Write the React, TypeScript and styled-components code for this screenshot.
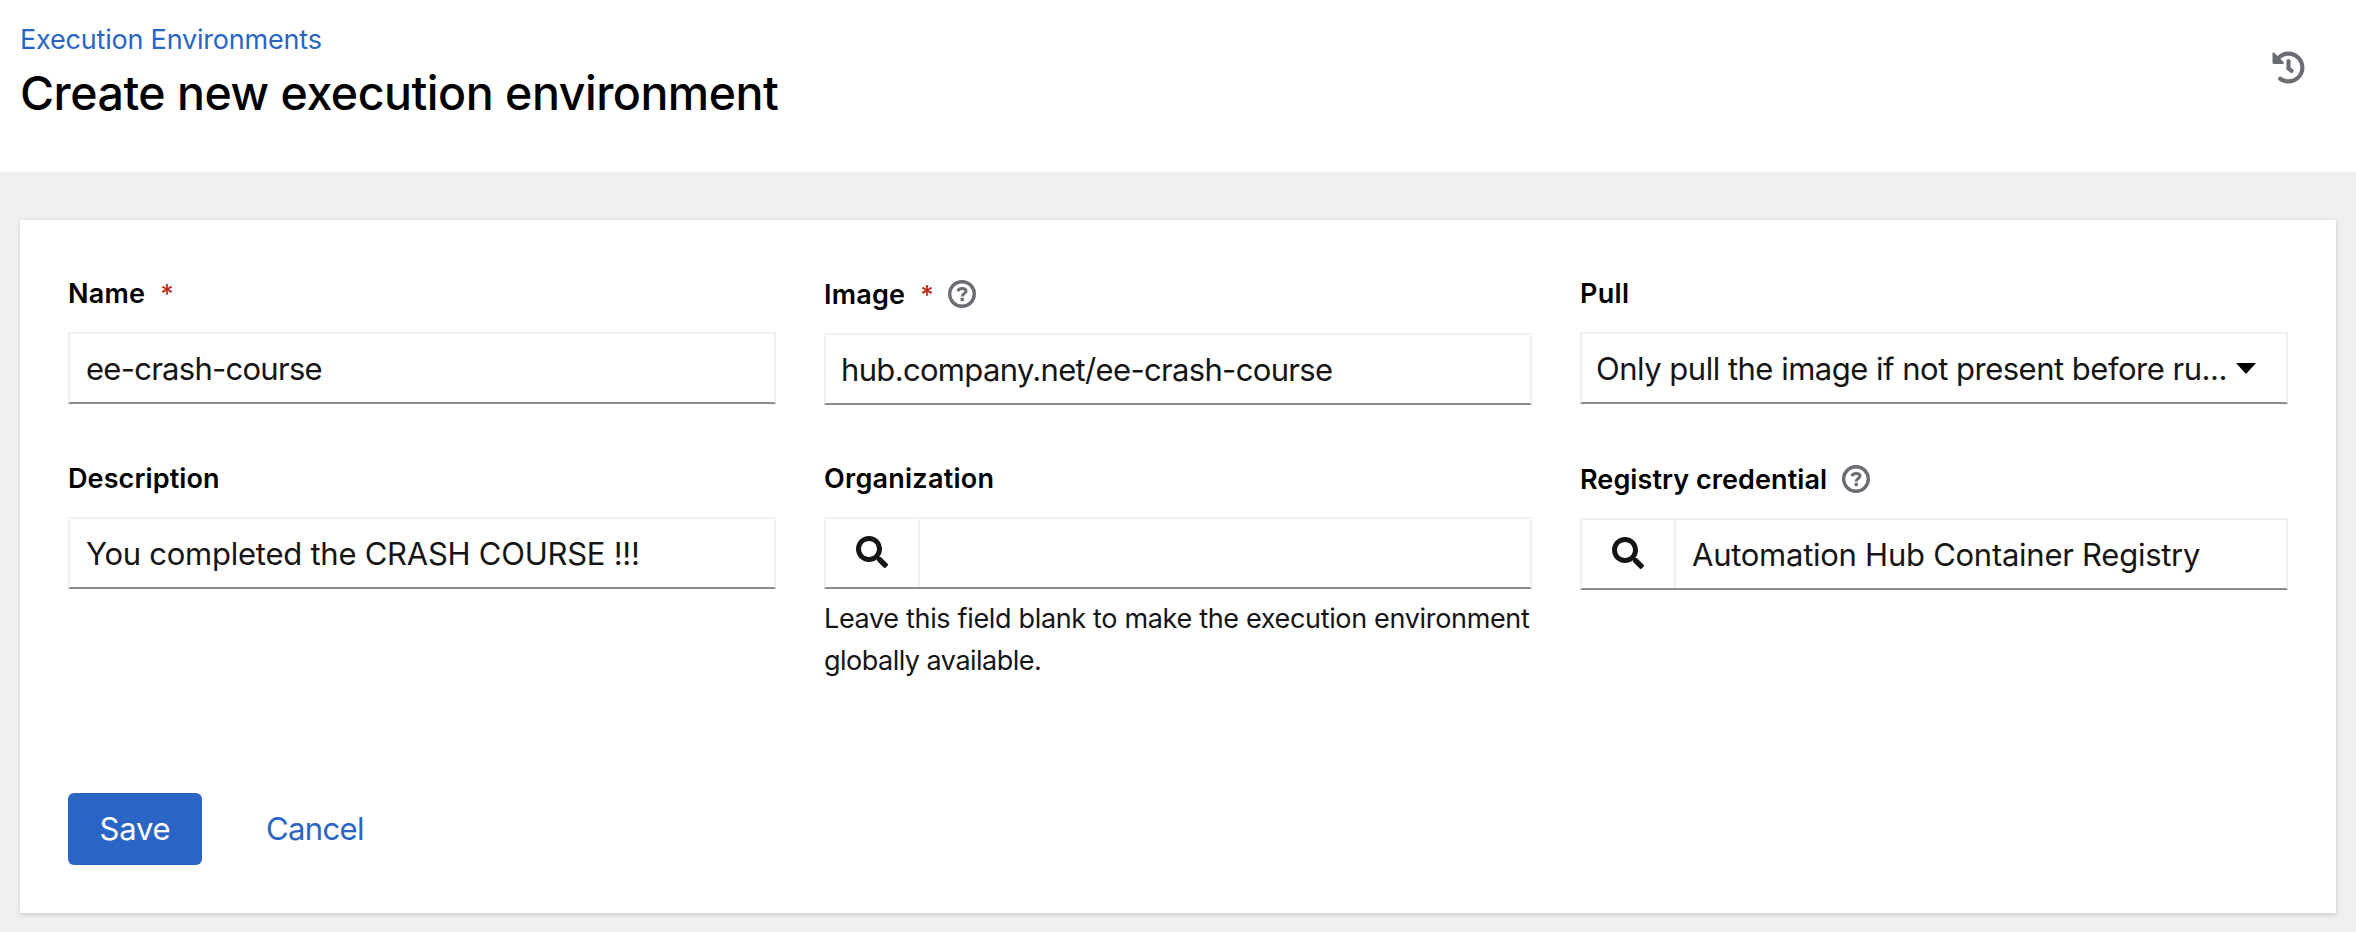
import React from 'react';
import styled, { createGlobalStyle } from 'styled-components';
import { FaHistory, FaSearch } from 'react-icons/fa';

const GlobalStyle = createGlobalStyle`
  *, *::before, *::after { box-sizing: border-box; }
  body {
    margin: 0;
    background: #efefef;
    color: #151515;
    font-family: Inter, "Liberation Sans", sans-serif;
    font-size: 31px;
  }
  button, input { font: inherit; color: inherit; }
`;

const Page = styled.div`
  min-height: 932px;
`;

const Header = styled.header`
  display: flex;
  justify-content: space-between;
  height: 172px;
  padding: 19px 51px 0 20px;
  background: #fff;
`;

const Breadcrumb = styled.a`
  display: block;
  color: #2a65c6;
  font-size: 27px;
  line-height: 42px;
  letter-spacing: -0.2px;
  text-decoration: none;
`;

const Title = styled.h1`
  margin: 1px 0 0;
  color: #000;
  font-size: 46.5px;
  font-weight: 500;
  line-height: 62px;
  letter-spacing: -0.484px;
`;

const HistoryButton = styled.button`
  display: flex;
  align-self: flex-start;
  margin-top: 32px;
  padding: 0;
  border: 0;
  background: none;
  color: #6a6e73;
  font-size: 33px;
`;

const Card = styled.main`
  height: 693px;
  margin: 48px 20px 0;
  padding: 48px;
  background: #fff;
  box-shadow: 0 2px 4px rgba(3, 3, 3, 0.12), 0 0 4px rgba(3, 3, 3, 0.06);
`;

const FieldGrid = styled.div`
  display: grid;
  grid-template-columns: repeat(3, 1fr);
  gap: 48px;
  align-items: start;
`;

const LabelRow = styled.div<{ $tall?: boolean }>`
  display: flex;
  height: ${(p) => (p.$tall ? 65 : 64)}px;
  padding-top: ${(p) => (p.$tall ? 6 : 5)}px;
  line-height: 42px;
`;

const Label = styled.label<{ $spacing: number }>`
  color: #000;
  font-size: 27px;
  font-weight: 600;
  letter-spacing: ${(p) => p.$spacing}px;
`;

const Required = styled.span`
  margin-left: 15px;
  color: #bd2a1a;
  font-size: 26px;
  font-weight: 500;
`;

const HelpButton = styled.button<{ $gap: number }>`
  display: flex;
  align-self: flex-start;
  margin: 6px 0 0 ${(p) => p.$gap}px;
  padding: 0;
  border: 0;
  background: none;
  color: #6a6e73;
`;

const Control = styled.div`
  display: flex;
  height: 72px;
  border: 2px solid #f0f0f0;
  border-bottom-color: #8a8d90;
`;

const TextInput = styled.input<{ $spacing?: number; $left?: number }>`
  flex: 1;
  min-width: 0;
  padding: 1px 16px 0 ${(p) => p.$left ?? 16}px;
  border: 0;
  outline: 0;
  background: transparent;
  letter-spacing: ${(p) => p.$spacing ?? 0}px;
`;

const SearchButton = styled.button`
  display: flex;
  align-items: flex-start;
  justify-content: center;
  width: 94px;
  padding: 17px 0 0;
  border: 0;
  border-right: 2px solid #f0f0f0;
  background: none;
  font-size: 32px;
`;

const Select = styled.button`
  display: flex;
  flex: 1;
  min-width: 0;
  align-items: center;
  padding: 0 30px 0 14px;
  border: 0;
  background: none;
  text-align: left;
`;

const SelectText = styled.span`
  flex: 1;
  letter-spacing: -0.498px;
  white-space: nowrap;
`;

const Caret = styled.span`
  border: 10px solid transparent;
  border-top: 11px solid #000;
  border-bottom: 0;
`;

const HelperText = styled.p`
  margin: 9px 0 0;
  font-size: 27px;
  line-height: 42px;
  letter-spacing: -0.333px;
  white-space: nowrap;

  span { letter-spacing: -0.514px; }
`;

const Actions = styled.div`
  display: flex;
  margin-top: 111px;
`;

const ActionButton = styled.button<{ $primary?: boolean }>`
  height: 72px;
  padding: 0 ${(p) => (p.$primary ? 0 : 32)}px 1px;
  width: ${(p) => (p.$primary ? '134px' : 'auto')};
  margin-right: 32px;
  border: 0;
  border-radius: 6px;
  background: ${(p) => (p.$primary ? '#2a65c6' : 'none')};
  color: ${(p) => (p.$primary ? '#fff' : '#2a65c6')};
  letter-spacing: ${(p) => (p.$primary ? -0.22 : -0.63)}px;
`;

const HelpIcon = () => (
  <svg width="28" height="28" viewBox="0 0 28 28" fill="none" stroke="currentColor">
    <circle cx="14" cy="14" r="12.3" strokeWidth="3.4" />
    <path d="M9.8 11.2C10.4 9.3 12 8.6 14.1 8.6c2.4 0 3.9 1 3.9 2.7 0 2.4-3.8 2.2-3.8 5.1" strokeWidth="3" />
    <path d="M14.2 17.8v3.3" strokeWidth="3.3" />
  </svg>
);

type FieldProps = {
  id: string;
  label: string;
  spacing: number;
  required?: boolean;
  helpGap?: number;
  children: React.ReactNode;
};

function Field({ id, label, spacing, required, helpGap, children }: FieldProps) {
  return (
    <div>
      <LabelRow $tall={helpGap !== undefined}>
        <Label htmlFor={id} $spacing={spacing}>{label}</Label>
        {required && <Required>*</Required>}
        {helpGap !== undefined && (
          <HelpButton type="button" $gap={helpGap} aria-label="More information">
            <HelpIcon />
          </HelpButton>
        )}
      </LabelRow>
      {children}
    </div>
  );
}

export default function App() {
  return (
    <Page>
      <GlobalStyle />
      <Header>
        <div>
          <Breadcrumb>Execution Environments</Breadcrumb>
          <Title>Create new execution environment</Title>
        </div>
        <HistoryButton aria-label="History"><FaHistory /></HistoryButton>
      </Header>
      <Card>
        <FieldGrid>
          <Field id="name" label="Name" spacing={0.228} required>
            <Control><TextInput id="name" defaultValue="ee-crash-course" $spacing={-0.736} /></Control>
          </Field>
          <Field id="image" label="Image" spacing={0.206} required helpGap={14}>
            <Control>
              <TextInput id="image" defaultValue="hub.company.net/ee-crash-course" $spacing={-0.669} $left={15} />
            </Control>
          </Field>
          <Field id="pull" label="Pull" spacing={0.329}>
            <Control>
              <Select id="pull" type="button">
                <SelectText>Only pull the image if not present before ru...</SelectText>
                <Caret />
              </Select>
            </Control>
          </Field>
          <Field id="description" label="Description" spacing={0.104}>
            <Control>
              <TextInput id="description" defaultValue="You completed the CRASH COURSE !!!" $spacing={-0.25} $left={16} />
            </Control>
          </Field>
          <Field id="organization" label="Organization" spacing={0.25}>
            <Control>
              <SearchButton type="button" aria-label="Search"><FaSearch /></SearchButton>
              <TextInput id="organization" />
            </Control>
            <HelperText>
              Leave this field blank to make the execution environment
              <br />
              <span>globally available.</span>
            </HelperText>
          </Field>
          <Field id="credential" label="Registry credential" spacing={0.076} helpGap={15}>
            <Control>
              <SearchButton type="button" aria-label="Search"><FaSearch /></SearchButton>
              <TextInput id="credential" defaultValue="Automation Hub Container Registry" $spacing={-0.26} />
            </Control>
          </Field>
        </FieldGrid>
        <Actions>
          <ActionButton type="button" $primary>Save</ActionButton>
          <ActionButton type="button">Cancel</ActionButton>
        </Actions>
      </Card>
    </Page>
  );
}
